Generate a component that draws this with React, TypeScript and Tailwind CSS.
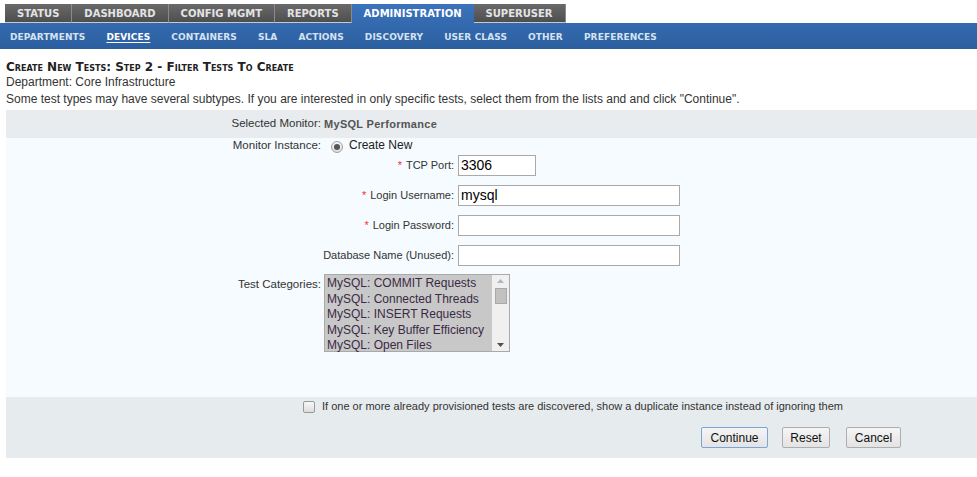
import { useState } from 'react';

const TABS = ['STATUS', 'DASHBOARD', 'CONFIG MGMT', 'REPORTS', 'ADMINISTRATION', 'SUPERUSER'];
const SUBNAV = ['DEPARTMENTS', 'DEVICES', 'CONTAINERS', 'SLA', 'ACTIONS', 'DISCOVERY', 'USER CLASS', 'OTHER', 'PREFERENCES'];
const CATEGORIES = [
  'MySQL: COMMIT Requests',
  'MySQL: Connected Threads',
  'MySQL: INSERT Requests',
  'MySQL: Key Buffer Efficiency',
  'MySQL: Open Files',
];

function Field({ label, required, width, value }: { label: string; required?: boolean; width: string; value?: string }) {
  return (
    <div className="flex items-center h-[20px]">
      <div className="w-[134px] shrink-0 flex justify-end pr-[4px] text-[11px] text-[#333] whitespace-nowrap">
        <span>
          {required && <span className="text-[#e33] mr-[4px]">*</span>}
          {label}:
        </span>
      </div>
      <input
        defaultValue={value}
        className={`${width} h-[21px] border border-[#a9a9a9] bg-white px-[2px] text-[14px] text-black outline-none`}
        style={{ fontFamily: '"Liberation Sans", Arial, sans-serif' }}
      />
    </div>
  );
}

export default function App() {
  const [dup, setDup] = useState(false);

  return (
    <div className="w-[977px] h-[477px] bg-white overflow-hidden" style={{ fontFamily: '"Liberation Sans", Arial, sans-serif' }}>
      {/* top tabs */}
      <div className="flex pt-[4px] pl-[5px]" style={{ fontFamily: '"DejaVu Sans", Verdana, sans-serif' }}>
        {TABS.map((t) => {
          const active = t === 'ADMINISTRATION';
          return (
            <div
              key={t}
              className={
                active
                  ? 'h-[19px] px-[12px] flex items-center text-[10px] font-bold text-white bg-gradient-to-b from-[#3b74bd] to-[#336aaf]'
                  : 'h-[19px] px-[12px] flex items-center text-[10px] font-bold text-[#e4e4e4] bg-gradient-to-b from-[#6a6a6a] to-[#4e4e4e] border-r border-[#8a8a8a] border-b border-b-[#c9c9c9]'
              }
            >
              {t}
            </div>
          );
        })}
      </div>

      {/* sub nav */}
      <div
        className="h-[26px] flex items-center gap-[21px] pl-[10px] pt-[4px] bg-gradient-to-b from-[#346aaf] to-[#2b5f9f]"
        style={{ fontFamily: '"DejaVu Sans", Verdana, sans-serif' }}
      >
        {SUBNAV.map((s) => (
          <span
            key={s}
            className={
              s === 'DEVICES'
                ? 'text-[9px] font-bold tracking-[0.1px] text-white underline underline-offset-2'
                : 'text-[9px] font-bold tracking-[0.1px] text-[#d6e2f1]'
            }
          >
            {s}
          </span>
        ))}
      </div>

      {/* heading */}
      <div className="px-[6px] pt-[11px]">
        <div
          className="text-[12px] font-bold text-[#222] leading-[14px]"
          style={{ fontFamily: '"DejaVu Sans", Verdana, sans-serif', fontVariant: 'small-caps' }}
        >
          Create New Tests: Step 2 - Filter Tests To Create
        </div>
        <div className="text-[12px] text-[#333] leading-[16px]">Department: Core Infrastructure</div>
        <div className="text-[12px] text-[#333] leading-[18px]">
          Some test types may have several subtypes. If you are interested in only specific tests, select them from the lists and and click "Continue".
        </div>
      </div>

      {/* form */}
      <div className="ml-[6px] mt-[2px]">
        <div className="h-[28px] bg-[#e8ecef] flex items-center">
          <div className="w-[315px] text-right text-[11.5px] text-[#333]">Selected Monitor:</div>
          <div className="pl-[3px] text-[11px] font-bold text-[#555] tracking-[0.3px]">MySQL Performance</div>
        </div>

        <div className="bg-[#f5fbfe] h-[259px]">
          <div className="flex">
            <div className="w-[315px] text-right text-[11.5px] text-[#333] leading-[14px]">Monitor Instance:</div>
            <div className="pl-[3px]">
              <div className="flex items-center h-[14px]">
                <span className="ml-[7px] w-[12px] h-[12px] mt-[3px] rounded-full border border-[#a0a0a0] bg-gradient-to-b from-[#f4f4f4] to-[#dcdcdc] flex items-center justify-center">
                  <span className="w-[6px] h-[6px] rounded-full bg-[#555]" />
                </span>
                <span className="ml-[6px] text-[12px] text-[#222]">Create New</span>
              </div>
              <div className="flex flex-col gap-[10px] mt-[3px]">
                <Field label="TCP Port" required width="w-[78px]" value="3306" />
                <Field label="Login Username" required width="w-[222px]" value="mysql" />
                <Field label="Login Password" required width="w-[222px]" />
                <Field label="Database Name (Unused)" width="w-[222px]" />
              </div>
            </div>
          </div>

          <div className="flex mt-[9px]">
            <div className="w-[315px] text-right text-[11.5px] text-[#333] pt-[2px]">Test Categories:</div>
            <div className="ml-[3px] w-[186px] h-[78px] border border-[#a9a9a9] flex bg-[#c8c8c8]">
              <div className="flex-1 pl-[2px] pt-[1px]">
                {CATEGORIES.map((c) => (
                  <div key={c} className="text-[12px] leading-[15.5px] text-[#3a2a45] whitespace-nowrap">
                    {c}
                  </div>
                ))}
              </div>
              <div className="w-[17px] bg-[#f0f0f0] flex flex-col items-center justify-between py-[4px]">
                <div className="flex flex-col items-center gap-[5px]">
                  <svg width="7" height="4" viewBox="0 0 7 4">
                    <path d="M0 4 L3.5 0 L7 4 Z" fill="#b5b5b5" />
                  </svg>
                  <div className="w-[12px] h-[16px] bg-[#c1c1c1] border border-[#a8a8a8]" />
                </div>
                <svg width="7" height="4" viewBox="0 0 7 4">
                  <path d="M0 0 L7 0 L3.5 4 Z" fill="#505050" />
                </svg>
              </div>
            </div>
          </div>
        </div>

        <div className="bg-[#e6ebee] h-[61px]">
          <label className="flex items-center pl-[297px] pt-[2px] h-[17px] cursor-pointer">
            <input
              type="checkbox"
              checked={dup}
              onChange={(e) => setDup(e.target.checked)}
              className="w-[12px] h-[12px] appearance-none rounded-[2px] border border-[#9a9a9a] bg-gradient-to-b from-[#f7f7f7] to-[#dedede] checked:bg-[#4a7cc2]"
            />
            <span className="ml-[7px] text-[11px] text-[#333]">
              If one or more already provisioned tests are discovered, show a duplicate instance instead of ignoring them
            </span>
          </label>
          <div className="flex justify-end gap-[14px] pr-[76px] mt-[13px]">
            <button className="h-[21px] w-[67px] text-[12px] text-[#111] border border-[#7ca4d8] rounded-[2px] bg-gradient-to-b from-[#f5f5f5] to-[#e3e3e3]">
              Continue
            </button>
            <button className="h-[21px] w-[48px] text-[12px] text-[#111] border border-[#adadad] rounded-[2px] bg-gradient-to-b from-[#f5f5f5] to-[#e3e3e3]">
              Reset
            </button>
            <button className="h-[21px] w-[55px] ml-[2px] text-[12px] text-[#111] border border-[#adadad] rounded-[2px] bg-gradient-to-b from-[#f5f5f5] to-[#e3e3e3]">
              Cancel
            </button>
          </div>
        </div>
      </div>
    </div>
  );
}
